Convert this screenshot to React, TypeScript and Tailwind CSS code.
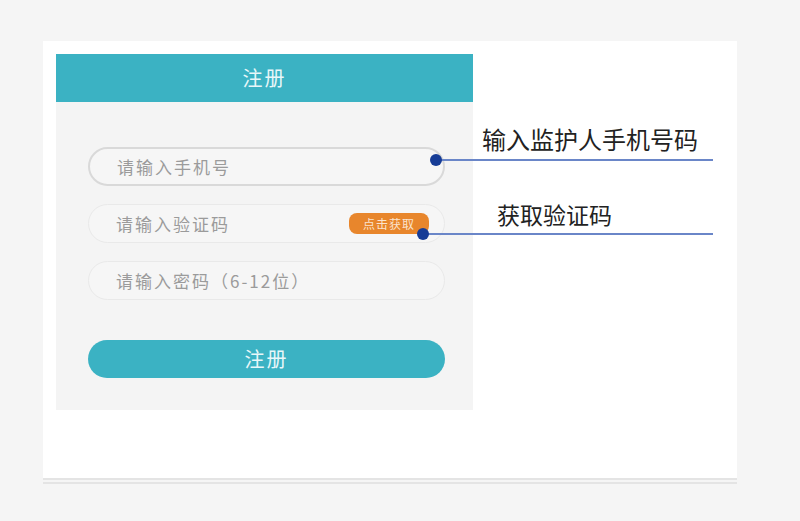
const font = "font-['Noto_Sans_CJK_SC',sans-serif]";

function Field({ text, strong, badge }: { text: string; strong?: boolean; badge?: boolean }) {
  return (
    <div
      className={`flex h-[39px] items-center justify-between rounded-full bg-[#f6f6f6] pl-[27px] pr-[15px] ${
        strong ? "border-2 border-[#d9d9d9]" : "border border-[#e9e9e9]"
      }`}
    >
      <span className="text-[17px] tracking-[2px] text-[#9b9b9b]">{text}</span>
      {badge && (
        <span className="flex h-[21px] w-[80px] items-center justify-center rounded-[8px] bg-[#e8862c] text-[12px] tracking-[1px] text-[#fbe3cc]">
          点击获取
        </span>
      )}
    </div>
  );
}

export default function App() {
  return (
    <div className={`h-[521px] w-[800px] bg-[#f5f5f5] pl-[43px] pt-[41px] ${font}`}>
      <div className="w-[694px] border-b-[6px] border-double border-[#e4e4e4]">
        <div className="relative h-[437px] bg-white pl-[13px] pt-[13px]">
          {/* phone panel */}
          <div className="flex h-[356px] w-[417px] flex-col bg-[#f4f4f4]">
            <div className="flex h-[48px] items-center justify-center bg-[#3bb2c3] text-[20px] tracking-[2px] text-[#e8f7f9]">
              注册
            </div>
            <div className="flex flex-col pl-[32px] pr-[28px] pt-[45px]">
              <div className="flex flex-col gap-[18px]">
                <Field text="请输入手机号" strong />
                <Field text="请输入验证码" badge />
                <Field text="请输入密码（6-12位）" />
              </div>
              <button className="mt-[40px] flex h-[38px] items-center justify-center rounded-full bg-[#3bb2c3] text-[20px] tracking-[2px] text-[#e8f7f9]">
                注册
              </button>
            </div>
          </div>

          {/* callouts */}
          <div className="absolute left-[439px] top-[83px] text-[24px] leading-[30px] text-[#222]">
            输入监护人手机号码
          </div>
          <div className="absolute left-[393px] top-[118px] h-[1.5px] w-[277px] bg-[#6a86c8]" />
          <div className="absolute left-[387px] top-[113px] h-[12px] w-[12px] rounded-full bg-[#163c96]" />

          <div className="absolute left-[454px] top-[158px] text-[23px] leading-[30px] text-[#222]">
            获取验证码
          </div>
          <div className="absolute left-[380px] top-[192px] h-[1.5px] w-[290px] bg-[#6a86c8]" />
          <div className="absolute left-[374px] top-[187px] h-[12px] w-[12px] rounded-full bg-[#163c96]" />
        </div>
      </div>
    </div>
  );
}
